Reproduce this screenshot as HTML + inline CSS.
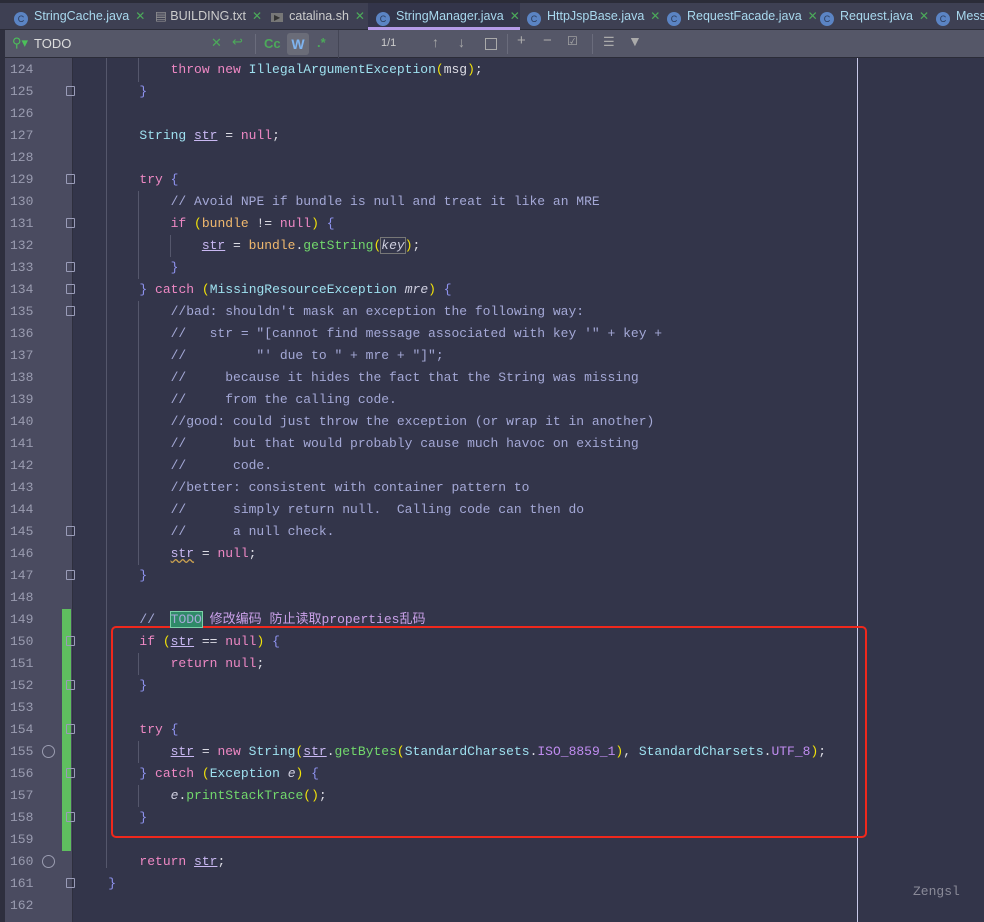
<!DOCTYPE html>
<html><head><meta charset="utf-8"><style>
*{margin:0;padding:0;box-sizing:border-box}
body{width:984px;height:922px;overflow:hidden;background:#33354a;font-family:"Liberation Sans",sans-serif;position:relative}
.tabs{position:absolute;left:0;top:0;width:984px;height:30px;background:#3e4053;border-top:3px solid #2b2c38;border-bottom:1px solid #2b2c38}
.tab{position:absolute;top:0;height:27px;line-height:27px;font-size:12.5px;color:#a8d8ee;white-space:nowrap}
.ci{display:inline-block;width:14px;height:14px;border-radius:50%;background:#5b84c4;color:#2b3b5a;font-size:9px;line-height:14px;text-align:center;vertical-align:-2px;margin-right:6px}
.x{color:#4caa5a;margin-left:6px;font-size:12px}
.search{position:absolute;left:0;top:30px;width:984px;height:28px;background:#555768;border-bottom:1px solid #2b2c38}
.gut{position:absolute;left:5px;top:58px;width:67px;height:864px;background:#4a4b60}
.lstrip{position:absolute;left:0;top:30px;width:5px;height:892px;background:#2e2f3e}
.ln{position:absolute;left:10px;width:40px;font:13px "Liberation Mono",monospace;color:#9a9cb0;height:22px;line-height:22px}
.code{position:absolute;left:77px;font:13px "Liberation Mono",monospace;color:#dcdce4;white-space:pre;height:22px;line-height:22px}
.k{color:#ee88c4}.c{color:#9ee0ef}.m{color:#a4a8d6}.v{color:#c9b8f2;text-decoration:underline}.p{color:#f1e20a}.b{color:#8f93f0}.g{color:#72d86c}.o{color:#f0b86e}.q{color:#c08cf0}.i{font-style:italic;color:#cfcfe0}
.fold{position:absolute;left:66px;width:9px;height:10px;border:1px solid #9a9cb8;border-radius:1px}
.guide{position:absolute;width:1px;background:#55576c}
</style></head><body>
<div class="tabs">
<div class="tab" style="left:14px"><span class="ci">C</span>StringCache.java<span class="x">✕</span></div>
<div class="tab" style="left:155px;color:#ccc"><span style="color:#999">▤ </span>BUILDING.txt<span class="x">✕</span></div>
<div class="tab" style="left:271px;color:#ccc"><span style="background:#777;color:#333;font-size:8px;padding:0 3px;margin-right:6px">▶</span>catalina.sh<span class="x">✕</span></div>
<div class="tab" style="left:368px;width:152px;padding-left:8px;background:#33354a;border-bottom:3px solid #b59ae8;height:27px"><span class="ci">C</span>StringManager.java<span class="x">✕</span></div>
<div class="tab" style="left:527px"><span class="ci">C</span>HttpJspBase.java<span class="x">✕</span></div>
<div class="tab" style="left:667px"><span class="ci">C</span>RequestFacade.java<span class="x">✕</span></div>
<div class="tab" style="left:820px"><span class="ci">C</span>Request.java<span class="x">✕</span></div>
<div class="tab" style="left:936px"><span class="ci">C</span>Messa</div>
</div>
<div class="search">
<span style="position:absolute;left:12px;top:5px;color:#4cc05a;font-size:13px">⚲▾</span>
<span style="position:absolute;left:34px;top:6px;color:#ddd;font-size:13px">TODO</span>
<span style="position:absolute;left:211px;top:5px;color:#4caa5a;font-size:13px">✕</span>
<span style="position:absolute;left:232px;top:4px;color:#4caa5a;font-size:13px">↩</span>
<span style="position:absolute;left:255px;top:4px;width:1px;height:20px;background:#6a6c7c"></span>
<span style="position:absolute;left:264px;top:6px;color:#4caa5a;font-size:13px;font-weight:bold">Cc</span>
<span style="position:absolute;left:287px;top:3px;width:22px;height:22px;background:#6a6c78;border-radius:3px;color:#7fb4f0;font-weight:bold;font-size:14px;text-align:center;line-height:22px">W</span>
<span style="position:absolute;left:317px;top:5px;color:#4caa5a;font-size:13px;font-weight:bold">.*</span>
<span style="position:absolute;left:338px;top:0;width:1px;height:28px;background:#444656"></span>
<span style="position:absolute;left:381px;top:7px;color:#ccc;font-size:11px">1/1</span>
<span style="position:absolute;left:432px;top:4px;color:#aaa;font-size:14px">↑</span>
<span style="position:absolute;left:458px;top:4px;color:#aaa;font-size:14px">↓</span>
<span style="position:absolute;left:485px;top:8px;width:12px;height:12px;border:1.5px solid #aaa"></span>
<span style="position:absolute;left:507px;top:4px;width:1px;height:20px;background:#6a6c7c"></span>
<span style="position:absolute;left:517px;top:2px;color:#aaa;font-size:15px">+</span>
<span style="position:absolute;left:543px;top:2px;color:#aaa;font-size:15px">−</span>
<span style="position:absolute;left:567px;top:4px;color:#aaa;font-size:12px">☑</span>
<span style="position:absolute;left:592px;top:4px;width:1px;height:20px;background:#6a6c7c"></span>
<span style="position:absolute;left:603px;top:4px;color:#aaa;font-size:13px">☰</span>
<span style="position:absolute;left:628px;top:3px;color:#aaa;font-size:14px">▼</span>
</div>
<div class="lstrip"></div>
<div class="gut"></div>
<div style="position:absolute;left:62px;top:609px;width:9px;height:242px;background:#5fbf5f"></div>
<div style="position:absolute;left:72px;top:58px;width:1px;height:864px;background:#2e2f3e"></div>
<div class="guide" style="left:106px;top:58px;height:810px"></div>
<div class="guide" style="left:138px;top:58px;height:24px"></div>
<div class="guide" style="left:138px;top:191px;height:88px"></div>
<div class="guide" style="left:170px;top:235px;height:22px"></div>
<div class="guide" style="left:138px;top:301px;height:264px"></div>
<div class="guide" style="left:138px;top:653px;height:22px"></div>
<div class="guide" style="left:138px;top:741px;height:22px"></div>
<div class="guide" style="left:138px;top:785px;height:22px"></div>
<div style="position:absolute;left:857px;top:58px;width:1px;height:864px;background:#c8c8e8"></div>
<div style="position:absolute;left:111px;top:626px;width:756px;height:212px;border:2px solid #f0281c;border-radius:5px"></div>

<div class="ln" style="top:59px">124</div><div class="ln" style="top:81px">125</div><div class="ln" style="top:103px">126</div><div class="ln" style="top:125px">127</div><div class="ln" style="top:147px">128</div><div class="ln" style="top:169px">129</div><div class="ln" style="top:191px">130</div><div class="ln" style="top:213px">131</div><div class="ln" style="top:235px">132</div><div class="ln" style="top:257px">133</div><div class="ln" style="top:279px">134</div><div class="ln" style="top:301px">135</div><div class="ln" style="top:323px">136</div><div class="ln" style="top:345px">137</div><div class="ln" style="top:367px">138</div><div class="ln" style="top:389px">139</div><div class="ln" style="top:411px">140</div><div class="ln" style="top:433px">141</div><div class="ln" style="top:455px">142</div><div class="ln" style="top:477px">143</div><div class="ln" style="top:499px">144</div><div class="ln" style="top:521px">145</div><div class="ln" style="top:543px">146</div><div class="ln" style="top:565px">147</div><div class="ln" style="top:587px">148</div><div class="ln" style="top:609px">149</div><div class="ln" style="top:631px">150</div><div class="ln" style="top:653px">151</div><div class="ln" style="top:675px">152</div><div class="ln" style="top:697px">153</div><div class="ln" style="top:719px">154</div><div class="ln" style="top:741px">155</div><div class="ln" style="top:763px">156</div><div class="ln" style="top:785px">157</div><div class="ln" style="top:807px">158</div><div class="ln" style="top:829px">159</div><div class="ln" style="top:851px">160</div><div class="ln" style="top:873px">161</div><div class="ln" style="top:895px">162</div>

<div class="fold" style="top:86px"></div><div class="fold" style="top:174px"></div><div class="fold" style="top:218px"></div><div class="fold" style="top:262px"></div><div class="fold" style="top:284px"></div><div class="fold" style="top:306px"></div><div class="fold" style="top:526px"></div><div class="fold" style="top:570px"></div><div class="fold" style="top:636px"></div><div class="fold" style="top:680px"></div><div class="fold" style="top:724px"></div><div class="fold" style="top:768px"></div><div class="fold" style="top:812px"></div><div class="fold" style="top:878px"></div>
<div style="position:absolute;left:42px;top:745px;width:13px;height:13px;border:1.5px solid #9a9cb0;border-radius:50%"></div>
<div style="position:absolute;left:42px;top:855px;width:13px;height:13px;border:1.5px solid #9a9cb0;border-radius:50%"></div>

<div class="code" style="top:59px">            <span class="k">throw new</span> <span class="c">IllegalArgumentException</span><span class="p">(</span>msg<span class="p">)</span>;</div>
<div class="code" style="top:81px">        <span class="b">}</span></div>
<div class="code" style="top:125px">        <span class="c">String</span> <span class="v">str</span> = <span class="k">null</span>;</div>
<div class="code" style="top:169px">        <span class="k">try</span> <span class="b">{</span></div>
<div class="code" style="top:191px">            <span class="m">// Avoid NPE if bundle is null and treat it like an MRE</span></div>
<div class="code" style="top:213px">            <span class="k">if</span> <span class="p">(</span><span class="o">bundle</span> != <span class="k">null</span><span class="p">)</span> <span class="b">{</span></div>
<div class="code" style="top:235px">                <span class="v">str</span> = <span class="o">bundle</span>.<span class="g">getString</span><span class="p">(</span><span class="i" style="outline:1px solid #777">key</span><span class="p">)</span>;</div>
<div class="code" style="top:257px">            <span class="b">}</span></div>
<div class="code" style="top:279px">        <span class="b">}</span> <span class="k">catch</span> <span class="p">(</span><span class="c">MissingResourceException</span> <span class="i">mre</span><span class="p">)</span> <span class="b">{</span></div>
<div class="code m" style="top:301px">            //bad: shouldn't mask an exception the following way:</div>
<div class="code m" style="top:323px">            //   str = "[cannot find message associated with key '" + key +</div>
<div class="code m" style="top:345px">            //         "' due to " + mre + "]";</div>
<div class="code m" style="top:367px">            //     because it hides the fact that the String was missing</div>
<div class="code m" style="top:389px">            //     from the calling code.</div>
<div class="code m" style="top:411px">            //good: could just throw the exception (or wrap it in another)</div>
<div class="code m" style="top:433px">            //      but that would probably cause much havoc on existing</div>
<div class="code m" style="top:455px">            //      code.</div>
<div class="code m" style="top:477px">            //better: consistent with container pattern to</div>
<div class="code m" style="top:499px">            //      simply return null.  Calling code can then do</div>
<div class="code m" style="top:521px">            //      a null check.</div>
<div class="code" style="top:543px">            <span class="v" style="text-decoration:underline wavy #c9a050">str</span> = <span class="k">null</span>;</div>
<div class="code" style="top:565px">        <span class="b">}</span></div>
<div class="code" style="top:609px">        <span class="m">//  <span style="background:#2f8a68;outline:1px solid #7bd0a8;color:#a4a8d6">TODO</span> <span style="font-family:'Liberation Mono','Noto Sans CJK SC',monospace;color:#c9a0e8">修改编码 防止读取properties乱码</span></span></div>
<div class="code" style="top:631px">        <span class="k">if</span> <span class="p">(</span><span class="v">str</span> == <span class="k">null</span><span class="p">)</span> <span class="b">{</span></div>
<div class="code" style="top:653px">            <span class="k">return null</span>;</div>
<div class="code" style="top:675px">        <span class="b">}</span></div>
<div class="code" style="top:719px">        <span class="k">try</span> <span class="b">{</span></div>
<div class="code" style="top:741px">            <span class="v">str</span> = <span class="k">new</span> <span class="c">String</span><span class="p">(</span><span class="v">str</span>.<span class="g">getBytes</span><span class="p">(</span><span class="c">StandardCharsets</span>.<span class="q">ISO_8859_1</span><span class="p">)</span>, <span class="c">StandardCharsets</span>.<span class="q">UTF_8</span><span class="p">)</span>;</div>
<div class="code" style="top:763px">        <span class="b">}</span> <span class="k">catch</span> <span class="p">(</span><span class="c">Exception</span> <span class="i">e</span><span class="p">)</span> <span class="b">{</span></div>
<div class="code" style="top:785px">            <span class="i">e</span>.<span class="g">printStackTrace</span><span class="p">()</span>;</div>
<div class="code" style="top:807px">        <span class="b">}</span></div>
<div class="code" style="top:851px">        <span class="k">return</span> <span class="v">str</span>;</div>
<div class="code" style="top:873px">    <span class="b">}</span></div>
<div style="position:absolute;left:913px;top:884px;font:13px 'Liberation Mono',monospace;color:#8a8a98">Zengsl</div>
</body></html>
